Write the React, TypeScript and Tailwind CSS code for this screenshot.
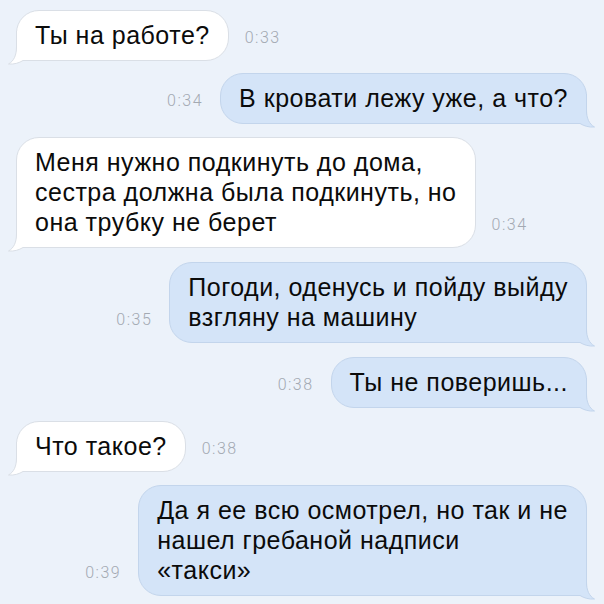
import React from "react";

type Msg = {
  out: boolean;
  lines: string[];
  time: string;
  mt: string;
};

const messages: Msg[] = [
  { out: false, lines: ["Ты на работе?"], time: "0:33", mt: "mt-[10px]" },
  { out: true, lines: ["В кровати лежу уже, а что?"], time: "0:34", mt: "mt-[12px]" },
  {
    out: false,
    lines: ["Меня нужно подкинуть до дома,", "сестра должна была подкинуть, но", "она трубку не берет"],
    time: "0:34",
    mt: "mt-[13px]",
  },
  { out: true, lines: ["Погоди, оденусь и пойду выйду", "взгляну на машину"], time: "0:35", mt: "mt-[14px]" },
  { out: true, lines: ["Ты не поверишь..."], time: "0:38", mt: "mt-[14px]" },
  { out: false, lines: ["Что такое?"], time: "0:38", mt: "mt-[13px]" },
  {
    out: true,
    lines: ["Да я ее всю осмотрел, но так и не", "нашел гребаной надписи", "«такси»"],
    time: "0:39",
    mt: "mt-[13px]",
  },
];

const Tail = ({ out }: { out: boolean }) => {
  const shape = "M8.5 0 L8.5 16 C8.5 24 6 30 0.5 33 C6 33.5 11 32 15 29.5 L32 29.5";
  return (
    <svg
      width="32"
      height="34"
      viewBox="0 0 32 34"
      className={
        out ? "absolute right-[-9px] bottom-[-5px] -scale-x-100" : "absolute left-[-9px] bottom-[-5px]"
      }
    >
      <path d={shape + " L32 0 Z"} fill={out ? "#d4e4f8" : "#ffffff"} />
      <path d={shape} fill="none" stroke={out ? "#c3d5ec" : "#dadfe6"} strokeWidth="1" />
    </svg>
  );
};

const Time = ({ t, out }: { t: string; out: boolean }) => (
  <span
    className={`mb-[14px] text-[16px] leading-[18px] font-light tracking-[1.5px] text-[#a3a9b2] ${
      out ? "mr-[17px]" : "ml-[16px]"
    }`}
    style={{ fontFamily: "Roboto, 'Liberation Sans', sans-serif" }}
  >
    {t}
  </span>
);

export default function App() {
  return (
    <div
      className="w-[604px] h-[604px] overflow-hidden bg-[#ecf2fa] flex flex-col"
      style={{ fontFamily: "'Liberation Sans', Arial, sans-serif" }}
    >
      {messages.map((m, i) => (
        <div
          key={i}
          className={`flex items-end ${m.mt} ${m.out ? "justify-end pr-[17px]" : "justify-start pl-[16px]"}`}
        >
          {m.out && <Time t={m.time} out />}
          <div
            className={`relative whitespace-nowrap px-[18px] pt-[9px] pb-[10px] text-[25px] leading-[30px] tracking-[0.5px] text-[#0b0b0b] rounded-[23px] border ${
              m.out
                ? "bg-[#d4e4f8] border-[#c3d5ec] rounded-br-none"
                : "bg-white border-[#dadfe6] rounded-bl-none"
            }`}
          >
            <Tail out={m.out} />
            <div className="relative z-10">
              {m.lines.map((l, j) => (
                <div key={j}>{l}</div>
              ))}
            </div>
          </div>
          {!m.out && <Time t={m.time} out={false} />}
        </div>
      ))}
    </div>
  );
}
